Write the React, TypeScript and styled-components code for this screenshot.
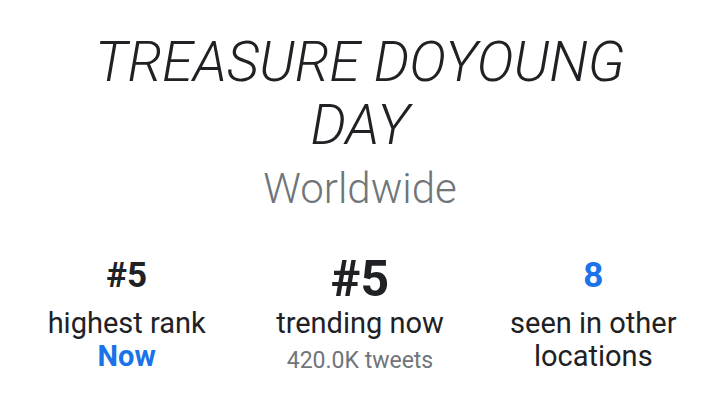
import styled, { createGlobalStyle } from "styled-components";

const GlobalStyle = createGlobalStyle`
  html, body {
    margin: 0;
    padding: 0;
    background: #ffffff;
  }
  body {
    font-family: Roboto, "Noto Sans", Arial, sans-serif;
    -webkit-font-smoothing: antialiased;
  }
`

const Page = styled.div`
  width: 720px;
  height: 405px;
  box-sizing: border-box;
  padding: 31px 10px 0 10px;
  display: flex;
  flex-direction: column;
  align-items: center;
  overflow: hidden;
`

const Title = styled.h1`
  margin: 0;
  width: 560px;
  text-align: center;
  font-size: 56px;
  line-height: 63px;
  font-weight: 300;
  font-style: italic;
  color: #202124;
`

const Region = styled.div`
  margin-top: 8px;
  font-size: 42px;
  line-height: 48px;
  font-weight: 300;
  color: #70757a;
`

const Stats = styled.div`
  margin-top: 41px;
  width: 100%;
  display: grid;
  grid-template-columns: repeat(3, 1fr);
`

const Stat = styled.div`
  display: flex;
  flex-direction: column;
  align-items: center;
  text-align: center;
`

const Number = styled.div<{ $big?: boolean; $blue?: boolean }>`
  font-weight: 700;
  font-size: ${(p) => (p.$big ? "50px" : "35px")};
  line-height: ${(p) => (p.$big ? "50px" : "44px")};
  margin-bottom: ${(p) => (p.$big ? "3px" : "9px")};
  color: ${(p) => (p.$blue ? "#1a73e8" : "#202124")};
`

const Label = styled.div`
  font-size: 29px;
  line-height: 33px;
  color: #202124;
`

const Highlight = styled.div`
  font-size: 29px;
  line-height: 33px;
  font-weight: 700;
  color: #1a73e8;
`

const Sub = styled.div`
  margin-top: 5px;
  font-size: 23px;
  line-height: 32px;
  color: #70757a;
`

export default function App() {
  return (
    <>
      <GlobalStyle />
      <Page>
        <Title>TREASURE DOYOUNG DAY</Title>
        <Region>Worldwide</Region>
        <Stats>
          <Stat>
            <Number>#5</Number>
            <Label>highest rank</Label>
            <Highlight>Now</Highlight>
          </Stat>
          <Stat>
            <Number $big>#5</Number>
            <Label>trending now</Label>
            <Sub>420.0K tweets</Sub>
          </Stat>
          <Stat>
            <Number $blue>8</Number>
            <Label>seen in other<br />locations</Label>
          </Stat>
        </Stats>
      </Page>
    </>
  )
}
